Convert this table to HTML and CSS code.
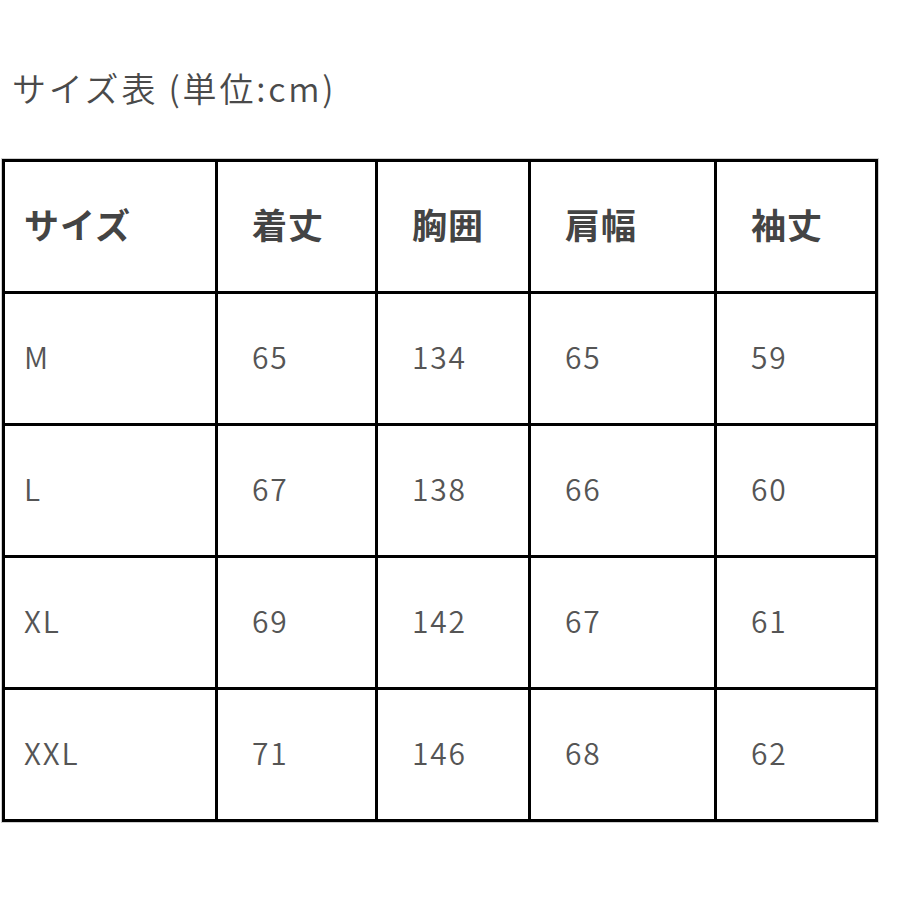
FILE: index.html
```html
<!DOCTYPE html>
<html lang="ja">
<head>
<meta charset="utf-8">
<link rel="stylesheet" href="styles.css">
</head>
<body>
<div class="page">
  <h1 class="title">サイズ表 (単位:cm)</h1>
  <div class="frame">
    <table class="size-table">
      <colgroup>
        <col class="c1"><col class="c2"><col class="c3"><col class="c4"><col class="c5">
      </colgroup>
      <thead>
        <tr><th class="first">サイズ</th><th>着丈</th><th>胸囲</th><th>肩幅</th><th>袖丈</th></tr>
      </thead>
      <tbody>
        <tr><td class="first">M</td><td>65</td><td>134</td><td>65</td><td>59</td></tr>
        <tr><td class="first">L</td><td>67</td><td>138</td><td>66</td><td>60</td></tr>
        <tr><td class="first">XL</td><td>69</td><td>142</td><td>67</td><td>61</td></tr>
        <tr><td class="first">XXL</td><td>71</td><td>146</td><td>68</td><td>62</td></tr>
      </tbody>
    </table>
  </div>
</div>
</body>
</html>
```
FILE: styles.css
```css
html, body {
  margin: 0;
  padding: 0;
  background: #ffffff;
}
.page {
  padding: 68px 0 0 0;
  font-family: "Noto Sans CJK JP", "Noto Sans", sans-serif;
}
.title {
  margin: 0 0 50px 12px;
  font-size: 34px;
  line-height: 40px;
  font-weight: 350;
  letter-spacing: 2.8px;
  color: #4a4a4a;
}
.frame {
  display: inline-block;
  margin-left: 1px;
  border: 1px solid #cfcfcf;
  padding: 0;
}
.size-table {
  border-collapse: collapse;
  table-layout: fixed;
  width: 876px;
}
.c1 { width: 213px; }
.c2 { width: 160px; }
.c3 { width: 153px; }
.c4 { width: 186px; }
.c5 { width: 161px; }
.size-table th,
.size-table td {
  border: 3px solid #000;
  height: 132px;
  padding: 0 0 0 34px;
  text-align: left;
  vertical-align: middle;
  box-sizing: border-box;
}
.size-table th {
  font-size: 35px;
  font-weight: 700;
  letter-spacing: 1px;
  color: #444;
  padding-bottom: 6px;
}
.size-table td {
  font-size: 30px;
  font-weight: 350;
  color: #555;
  letter-spacing: 1.8px;
  padding-bottom: 6px;
}
.size-table .first {
  padding-left: 19px;
}
```
